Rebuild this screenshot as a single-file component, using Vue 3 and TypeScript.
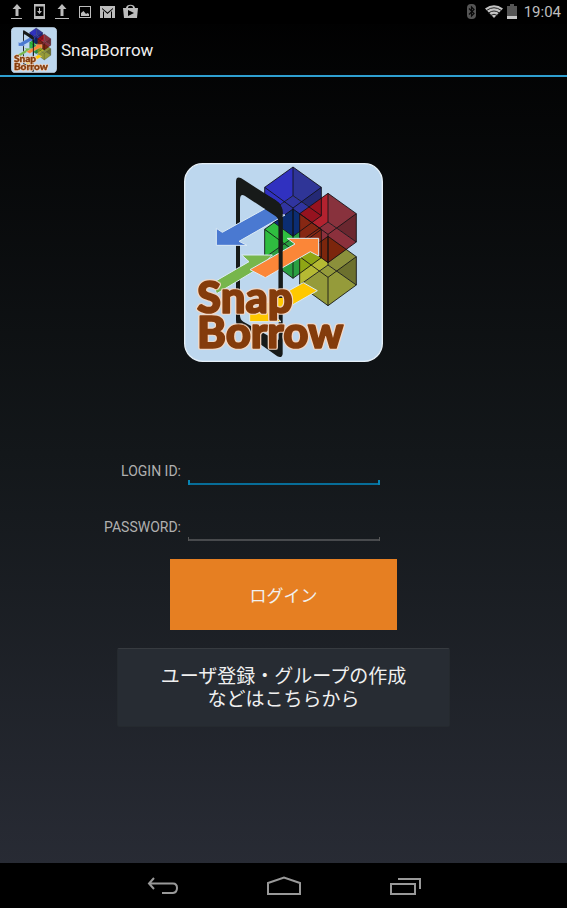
<script setup lang="ts">
import { ref } from 'vue'

interface Cube {
  name: string
  x: number
  y: number
  left: string
  right: string
  floor: string
}

interface Overlap {
  points: string
  fill: string
}

const cubes: Cube[] = [
  { name: 'green', x: 339, y: 153, left: '#2fbd40', right: '#2b9d45', floor: '#2a9f42' },
  { name: 'blue', x: 339, y: 27, left: '#3031c0', right: '#2f3597', floor: '#3034a0' },
  { name: 'yellow', x: 444, y: 235, left: '#b5b933', right: '#8b903b', floor: '#959b3a' },
  { name: 'red', x: 444, y: 106, left: '#b3222f', right: '#88323d', floor: '#8b303c' },
]

// Darker patches where two translucent cubes cover each other.
const overlaps: Overlap[] = [
  { points: '339,153 394,192 339,234 284,192', fill: '#0b2d72' },
  { points: '359,167 425,120 425,172 359,220', fill: '#96121f' },
  { points: '359,168 424,214 424,299 359,251', fill: '#862713' },
  { points: '359,297 425,249 425,300 359,347', fill: '#8fa615' },
  { points: '444,235 499,274 444,314 389,274', fill: '#7c260c' },
]

const loginId = ref('')
const password = ref('')
</script>

<template>
  <div class="screen">
    <div class="status-bar">
      <svg class="notices" width="130" height="18" viewBox="0 0 130 18" aria-hidden="true">
        <g fill="#bcbcbc">
          <path d="M7 1 11.500 6H8.500V13H5.500V6H2.500ZM1 15H12V16H1Z" />
          <path d="M52 1 56.500 6H53.500V13H50.500V6H47.500ZM45 15H59V16H45Z" />
          <path fill-rule="evenodd" d="M24 1H35V16H24ZM25.500 3.500V13H33.500V3.500ZM29 5H30V8H32L29.500 11 27 8H29Z" />
          <path fill-rule="evenodd" d="M69 3H81V15H69ZM70 4V14H80V4ZM71 13V10L73.500 8 76 11 77.500 10 79 11V13Z" />
          <path fill-rule="evenodd" d="M90 3H105V15H90ZM92 5V6L97.500 11 103 6V5L97.500 9.500ZM93 8V15H94V9ZM102 8 101 9V15H102Z" />
          <path fill-rule="evenodd" d="M113 5H116C116 .500 125 .500 125 5H128L127 15H114ZM118 5H123C123 2 118 2 118 5ZM118 7V13L124 10Z" />
        </g>
      </svg>
      <div class="status-right">
        <svg width="54" height="18" viewBox="0 0 54 18" aria-hidden="true">
          <rect x="2" y="1" width="9" height="15" rx="4" fill="#555" />
          <path d="M4 5.500 9 10.500 6.500 13V4L9 6.500 4 11.500" fill="none" stroke="#080808" stroke-width="1.200" />
          <path d="M20 5.500Q29 -1 38 5.500L29 15Z" fill="#c4c4c4" />
          <path d="M21.500 7.500Q29 2 36.500 7.500M23.500 10Q29 6 34.500 10M25.500 12.500Q29 10 32.500 12.500" fill="none" stroke="#222" stroke-width="1" />
          <path d="M42 3H45V1H49V3H52V16H42Z" fill="#555" />
          <path d="M42 13H52V16H42Z" fill="#c8c8c8" />
        </svg>
        <time>19:04</time>
      </div>
    </div>

    <header class="action-bar">
      <svg class="app-icon" viewBox="12 15 597 597" aria-hidden="true">
        <symbol id="logo" viewBox="12 15 597 597">
          <rect x="14" y="17" width="593" height="593" rx="54" fill="#bdd7ee" stroke="#e6f0f8" stroke-width="4" />
          <g v-for="c in cubes" :key="c.name" :transform="`translate(${c.x} ${c.y})`">
            <path d="M0 0-85 61V146L0 86Z" :fill="c.left" />
            <path d="M0 0 85 61V146L0 86Z" :fill="c.right" />
            <path d="M0 86 85 146 0 208-85 146Z" :fill="c.floor" />
            <path d="M85 61 26 104 85 146Z" fill="#000" fill-opacity=".22" />
          </g>
          <polygon v-for="o in overlaps" :key="o.points" :points="o.points" :fill="o.fill" />
          <path
            v-for="c in cubes"
            :key="c.name"
            :transform="`translate(${c.x} ${c.y})`"
            d="M0 0 85 61V146L0 208-85 146V61ZM0 0V86L-85 146M0 86 85 146M-85 61 0 123 85 61M0 123V208"
            fill="none" stroke="#101014" stroke-opacity=".85" stroke-width="3" stroke-linejoin="round"
          />
          <path
            d="M168 72Q168 53 184 61L286 126Q308 140 308 164V588Q306 602 292 595L181 516Q168 507 168 486ZM180 124V472Q180 486 190 491L286 545Q296 552 296 540V194Q296 180 286 174L194 113Q181 105 180 124Z"
            fill="#171a19" fill-rule="evenodd"
          />
          <g stroke="#dcebf5" stroke-width="3">
            <path d="M257 151 296 170 315 171 177 250 201 262H109V211L127 223Z" fill="#4a79d1" />
            <path d="M97 375 207 311 185 291H277L241 328 110 407Z" fill="#77b64c" />
            <path d="M210 335 345 258 322 241H416V294L391 281 256 359Z" fill="#fb8638" />
            <path d="M370 374 412 398 283 472 303 491H209V438L231 451Z" fill="#ffc800" />
          </g>
          <path d="M254 108 286 126Q308 140 308 164V420H296V194Q296 180 286 174L254 153Z" fill="#171a19" />
          <text class="wordmark"><tspan x="51" y="464">Snap</tspan><tspan x="51" y="570">Borrow</tspan></text>
        </symbol>
        <use href="#logo" x="12" y="15" width="597" height="597" />
      </svg>
      <h1>SnapBorrow</h1>
    </header>

    <main>
      <svg class="logo" viewBox="0 0 199 199" role="img" aria-label="Snap Borrow">
        <use href="#logo" width="199" height="199" />
      </svg>
      <form @submit.prevent>
        <div class="fields">
          <label for="login-id">LOGIN ID:</label>
          <div class="field active"><input id="login-id" v-model="loginId" type="text" autocomplete="username"></div>
          <label for="password">PASSWORD:</label>
          <div class="field"><input id="password" v-model="password" type="password" autocomplete="current-password"></div>
        </div>
        <button class="login" type="submit">ログイン</button>
        <button class="register" type="button">ユーザ登録・グループの作成<br>などはこちらから</button>
      </form>
    </main>

    <nav>
      <button type="button" aria-label="Back">
        <svg width="34" height="22" viewBox="0 0 34 22"><path d="M8 3 3 8.500 8 14M3 8.500H27Q31 8.500 31 13T27 18H16" /></svg>
      </button>
      <button type="button" aria-label="Home">
        <svg width="34" height="22" viewBox="0 0 34 22"><path d="M1 19V8L17 2.500 33 8V19Z" /></svg>
      </button>
      <button type="button" aria-label="Recent apps">
        <svg width="34" height="22" viewBox="0 0 34 22"><path d="M3 9H27V19H3ZM10 4H32V14" /></svg>
      </button>
    </nav>
  </div>
</template>

<style>
body {
  margin: 0;
  background: #000;
}
</style>

<style scoped>
.screen {
  display: flex;
  flex-direction: column;
  min-height: 100vh;
  color: #f0f0f0;
  font-family: Roboto, "Noto Sans CJK JP", sans-serif;
  background: linear-gradient(#000, #13171a 50%, #2a2d37);
}

.status-bar {
  display: flex;
  align-items: center;
  justify-content: space-between;
  height: 24px;
  padding: 0 6px 0 10px;
  background: #000;
}

.status-right {
  display: flex;
  align-items: center;
  gap: 5px;
  color: #bebebe;
  font-size: 15px;
}

.action-bar {
  display: flex;
  align-items: center;
  gap: 4px;
  height: 51px;
  padding-left: 11px;
  border-bottom: 2px solid #2e9fd0;
}

.app-icon {
  width: 46px;
  height: 46px;
}

h1 {
  margin: 0;
  font-size: 17px;
  font-weight: 400;
}

main {
  display: flex;
  flex: 1;
  flex-direction: column;
  align-items: center;
  padding: 86px 16px 32px;
}

.logo {
  width: 199px;
  height: 199px;
}

.wordmark {
  fill: #843c0c;
  stroke: #843c0c;
  stroke-width: 5px;
  stroke-linejoin: round;
  font-family: Lato, sans-serif;
  font-size: 131px;
  font-weight: 900;
  filter: drop-shadow(2px 0 0 #f6d9c4) drop-shadow(-2px 0 0 #f6d9c4) drop-shadow(0 2px 0 #f6d9c4) drop-shadow(0 -2px 0 #f6d9c4);
}

form {
  display: flex;
  flex-direction: column;
  align-items: center;
  width: 100%;
  margin-top: 95px;
}

.fields {
  display: grid;
  grid-template-columns: 78px 192px;
  gap: 28px 7px;
  align-items: center;
  padding-right: 84px;
}

label {
  color: #b0b0b0;
  font-size: 14px;
  text-align: right;
  white-space: nowrap;
}

.field {
  height: 28px;
  background:
    linear-gradient(#555, #555) left bottom / 1px 4px no-repeat,
    linear-gradient(#555, #555) right bottom / 1px 4px no-repeat,
    linear-gradient(#484a4d, #484a4d) bottom / 100% 2px no-repeat;
}

.field.active {
  background:
    linear-gradient(#0784b4, #0784b4) left bottom / 2px 5px no-repeat,
    linear-gradient(#0784b4, #0784b4) right bottom / 2px 5px no-repeat,
    linear-gradient(#076d98, #076d98) bottom / 100% 2px no-repeat;
}

input {
  box-sizing: border-box;
  width: 100%;
  height: 100%;
  padding: 0 6px;
  border: 0;
  outline: 0;
  background: transparent;
  color: #f0f0f0;
  font: 16px Roboto, sans-serif;
}

button {
  margin: 0;
  padding: 0;
  color: #f0f0f0;
  font-family: Roboto, "Noto Sans CJK JP", sans-serif;
}

.login {
  width: 227px;
  height: 71px;
  margin-top: 18px;
  border: 0;
  background: #e67f22;
  font-size: 17px;
}

.register {
  width: 333px;
  height: 79px;
  margin-top: 18px;
  border: 1px solid #252a2f;
  border-top-color: #373b40;
  border-radius: 2px;
  background: #272c33;
  font-size: 19px;
  line-height: 23px;
}

nav {
  display: flex;
  justify-content: center;
  background: #000;
}

nav button {
  display: grid;
  place-items: center;
  width: 121px;
  height: 45px;
  border: 0;
  background: transparent;
}

nav path {
  fill: none;
  stroke: #999;
  stroke-width: 2;
}
</style>
